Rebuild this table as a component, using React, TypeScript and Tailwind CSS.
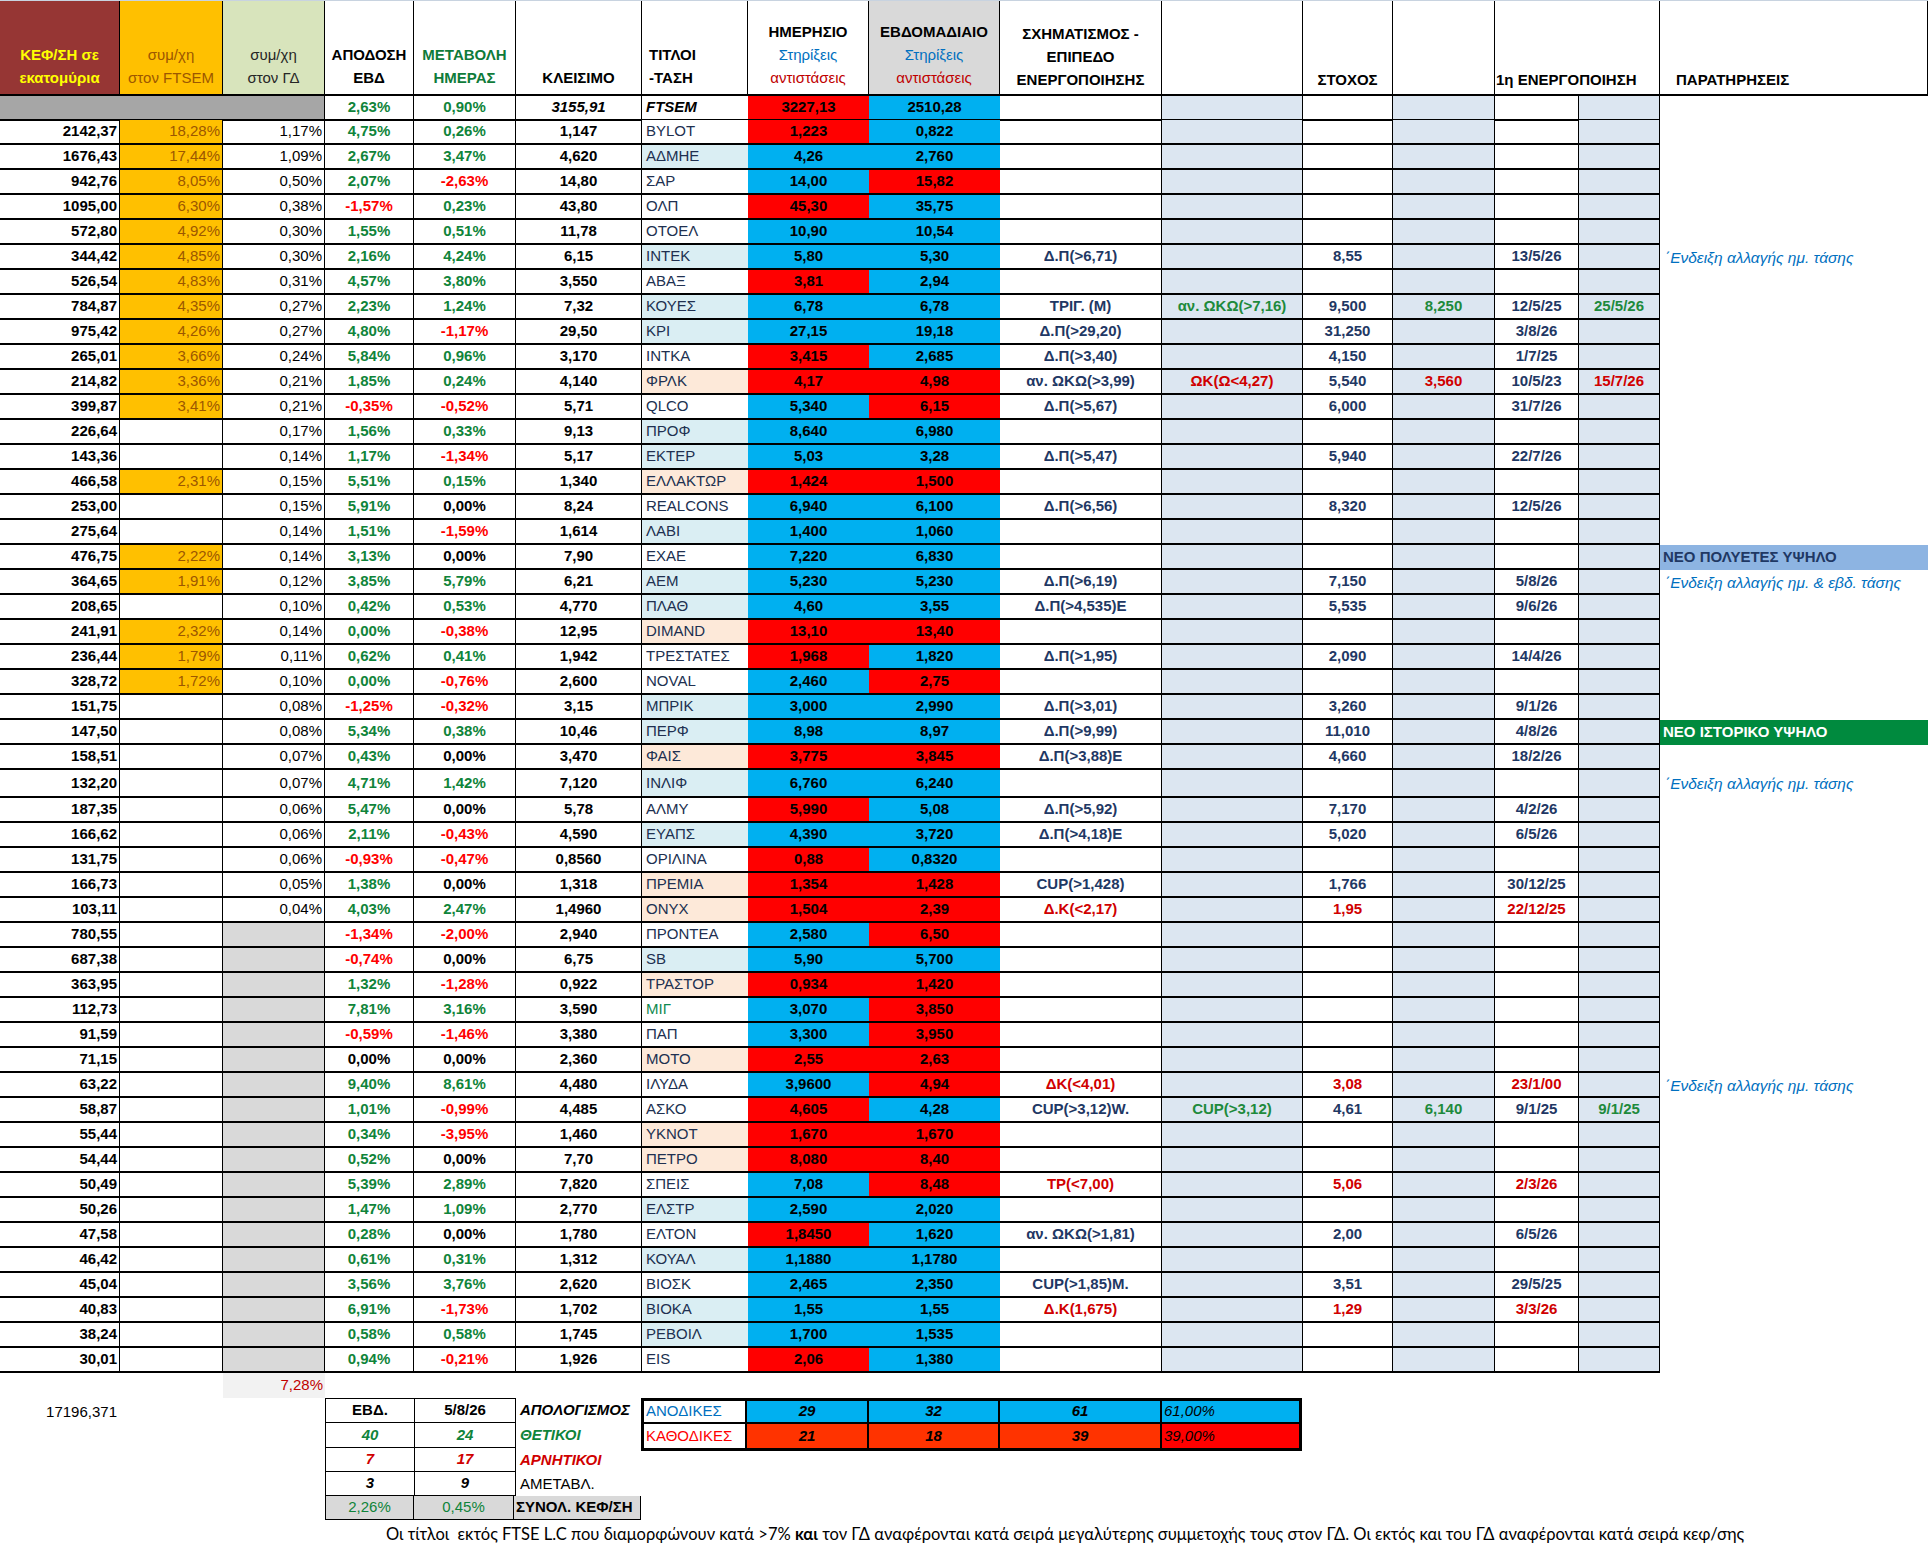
import React from "react";

const G =
  "grid grid-cols-[120px_103px_102px_89px_102px_126px_106px_121px_131px_162px_141px_90px_102px_84px_81px_268px]";

// c|ftsem|gd|apod|metab|close|title|titleBg|daily|dc|weekly|wc
const raw = [
  "2142,37|18,28%|1,17%|4,75%|0,26%|1,147|BYLOT|w|1,223|R|0,822|B",
  "1676,43|17,44%|1,09%|2,67%|3,47%|4,620|ΑΔΜΗΕ|b|4,26|B|2,760|B",
  "942,76|8,05%|0,50%|2,07%|-2,63%|14,80|ΣΑΡ|w|14,00|B|15,82|R",
  "1095,00|6,30%|0,38%|-1,57%|0,23%|43,80|ΟΛΠ|w|45,30|R|35,75|B",
  "572,80|4,92%|0,30%|1,55%|0,51%|11,78|ΟΤΟΕΛ|w|10,90|B|10,54|B",
  "344,42|4,85%|0,30%|2,16%|4,24%|6,15|ΙΝΤΕΚ|b|5,80|B|5,30|B",
  "526,54|4,83%|0,31%|4,57%|3,80%|3,550|ΑΒΑΞ|w|3,81|R|2,94|B",
  "784,87|4,35%|0,27%|2,23%|1,24%|7,32|ΚΟΥΕΣ|b|6,78|B|6,78|B",
  "975,42|4,26%|0,27%|4,80%|-1,17%|29,50|ΚΡΙ|b|27,15|B|19,18|B",
  "265,01|3,66%|0,24%|5,84%|0,96%|3,170|ΙΝΤΚΑ|w|3,415|R|2,685|B",
  "214,82|3,36%|0,21%|1,85%|0,24%|4,140|ΦΡΛΚ|p|4,17|R|4,98|R",
  "399,87|3,41%|0,21%|-0,35%|-0,52%|5,71|QLCO|w|5,340|B|6,15|R",
  "226,64||0,17%|1,56%|0,33%|9,13|ΠΡΟΦ|b|8,640|B|6,980|B",
  "143,36||0,14%|1,17%|-1,34%|5,17|ΕΚΤΕΡ|b|5,03|B|3,28|B",
  "466,58|2,31%|0,15%|5,51%|0,15%|1,340|ΕΛΛΑΚΤΩΡ|p|1,424|R|1,500|R",
  "253,00||0,15%|5,91%|0,00%|8,24|REALCONS|w|6,940|B|6,100|B",
  "275,64||0,14%|1,51%|-1,59%|1,614|ΛΑΒΙ|b|1,400|B|1,060|B",
  "476,75|2,22%|0,14%|3,13%|0,00%|7,90|ΕΧΑΕ|w|7,220|B|6,830|B",
  "364,65|1,91%|0,12%|3,85%|5,79%|6,21|ΑΕΜ|b|5,230|B|5,230|B",
  "208,65||0,10%|0,42%|0,53%|4,770|ΠΛΑΘ|b|4,60|B|3,55|B",
  "241,91|2,32%|0,14%|0,00%|-0,38%|12,95|DIMAND|p|13,10|R|13,40|R",
  "236,44|1,79%|0,11%|0,62%|0,41%|1,942|ΤΡΕΣΤΑΤΕΣ|w|1,968|R|1,820|B",
  "328,72|1,72%|0,10%|0,00%|-0,76%|2,600|NOVAL|w|2,460|B|2,75|R",
  "151,75||0,08%|-1,25%|-0,32%|3,15|ΜΠΡΙΚ|b|3,000|B|2,990|B",
  "147,50||0,08%|5,34%|0,38%|10,46|ΠΕΡΦ|b|8,98|B|8,97|B",
  "158,51||0,07%|0,43%|0,00%|3,470|ΦΑΙΣ|p|3,775|R|3,845|R",
  "132,20||0,07%|4,71%|1,42%|7,120|ΙΝΛΙΦ|b|6,760|B|6,240|B",
  "187,35||0,06%|5,47%|0,00%|5,78|ΑΛΜΥ|w|5,990|R|5,08|B",
  "166,62||0,06%|2,11%|-0,43%|4,590|ΕΥΑΠΣ|b|4,390|B|3,720|B",
  "131,75||0,06%|-0,93%|-0,47%|0,8560|ΟΡΙΛΙΝΑ|w|0,88|R|0,8320|B",
  "166,73||0,05%|1,38%|0,00%|1,318|ΠΡΕΜΙΑ|p|1,354|R|1,428|R",
  "103,11||0,04%|4,03%|2,47%|1,4960|ΟΝΥΧ|p|1,504|R|2,39|R",
  "780,55||#|-1,34%|-2,00%|2,940|ΠΡΟΝΤΕΑ|w|2,580|B|6,50|R",
  "687,38||#|-0,74%|0,00%|6,75|SB|b|5,90|B|5,700|B",
  "363,95||#|1,32%|-1,28%|0,922|ΤΡΑΣΤΟΡ|p|0,934|R|1,420|R",
  "112,73||#|7,81%|3,16%|3,590|ΜΙΓ|w|3,070|B|3,850|R",
  "91,59||#|-0,59%|-1,46%|3,380|ΠΑΠ|w|3,300|B|3,950|R",
  "71,15||#|0,00%|0,00%|2,360|ΜΟΤΟ|p|2,55|R|2,63|R",
  "63,22||#|9,40%|8,61%|4,480|ΙΛΥΔΑ|w|3,9600|B|4,94|R",
  "58,87||#|1,01%|-0,99%|4,485|ΑΣΚΟ|w|4,605|R|4,28|B",
  "55,44||#|0,34%|-3,95%|1,460|ΥΚΝΟΤ|p|1,670|R|1,670|R",
  "54,44||#|0,52%|0,00%|7,70|ΠΕΤΡΟ|p|8,080|R|8,40|R",
  "50,49||#|5,39%|2,89%|7,820|ΣΠΕΙΣ|w|7,08|B|8,48|R",
  "50,26||#|1,47%|1,09%|2,770|ΕΛΣΤΡ|b|2,590|B|2,020|B",
  "47,58||#|0,28%|0,00%|1,780|ΕΛΤΟΝ|w|1,8450|R|1,620|B",
  "46,42||#|0,61%|0,31%|1,312|ΚΟΥΑΛ|b|1,1880|B|1,1780|B",
  "45,04||#|3,56%|3,76%|2,620|ΒΙΟΣΚ|w|2,465|B|2,350|B",
  "40,83||#|6,91%|-1,73%|1,702|ΒΙΟΚΑ|b|1,55|B|1,55|B",
  "38,24||#|0,58%|0,58%|1,745|ΡΕΒΟΙΛ|b|1,700|B|1,535|B",
  "30,01||#|0,94%|-0,21%|1,926|EIS|w|2,06|R|1,380|B",
];

type Side = {
  sx?: string;
  red?: boolean;
  c11?: string;
  tg?: string;
  c13?: string;
  dt?: string;
  c15?: string;
  alt?: "g" | "r";
  note?: "trend" | "trend2" | "poly" | "hist";
};

const side: Record<string, Side> = {
  ΙΝΤΕΚ: { sx: "Δ.Π(>6,71)", tg: "8,55", dt: "13/5/26", note: "trend" },
  ΚΟΥΕΣ: { sx: "ΤΡΙΓ. (Μ)", c11: "αν. ΩΚΩ(>7,16)", tg: "9,500", c13: "8,250", dt: "12/5/25", c15: "25/5/26", alt: "g" },
  ΚΡΙ: { sx: "Δ.Π(>29,20)", tg: "31,250", dt: "3/8/26" },
  ΙΝΤΚΑ: { sx: "Δ.Π(>3,40)", tg: "4,150", dt: "1/7/25" },
  ΦΡΛΚ: { sx: "αν. ΩΚΩ(>3,99)", c11: "ΩΚ(Ω<4,27)", tg: "5,540", c13: "3,560", dt: "10/5/23", c15: "15/7/26", alt: "r" },
  QLCO: { sx: "Δ.Π(>5,67)", tg: "6,000", dt: "31/7/26" },
  ΕΚΤΕΡ: { sx: "Δ.Π(>5,47)", tg: "5,940", dt: "22/7/26" },
  REALCONS: { sx: "Δ.Π(>6,56)", tg: "8,320", dt: "12/5/26" },
  ΕΧΑΕ: { note: "poly" },
  ΑΕΜ: { sx: "Δ.Π(>6,19)", tg: "7,150", dt: "5/8/26", note: "trend2" },
  ΠΛΑΘ: { sx: "Δ.Π(>4,535)Ε", tg: "5,535", dt: "9/6/26" },
  ΤΡΕΣΤΑΤΕΣ: { sx: "Δ.Π(>1,95)", tg: "2,090", dt: "14/4/26" },
  ΜΠΡΙΚ: { sx: "Δ.Π(>3,01)", tg: "3,260", dt: "9/1/26" },
  ΠΕΡΦ: { sx: "Δ.Π(>9,99)", tg: "11,010", dt: "4/8/26", note: "hist" },
  ΦΑΙΣ: { sx: "Δ.Π(>3,88)Ε", tg: "4,660", dt: "18/2/26" },
  ΙΝΛΙΦ: { note: "trend" },
  ΑΛΜΥ: { sx: "Δ.Π(>5,92)", tg: "7,170", dt: "4/2/26" },
  ΕΥΑΠΣ: { sx: "Δ.Π(>4,18)Ε", tg: "5,020", dt: "6/5/26" },
  ΠΡΕΜΙΑ: { sx: "CUP(>1,428)", tg: "1,766", dt: "30/12/25" },
  ΟΝΥΧ: { sx: "Δ.Κ(<2,17)", red: true, tg: "1,95", dt: "22/12/25" },
  ΙΛΥΔΑ: { sx: "ΔΚ(<4,01)", red: true, tg: "3,08", dt: "23/1/00", note: "trend" },
  ΑΣΚΟ: { sx: "CUP(>3,12)W.", c11: "CUP(>3,12)", tg: "4,61", c13: "6,140", dt: "9/1/25", c15: "9/1/25", alt: "g" },
  ΣΠΕΙΣ: { sx: "ΤΡ(<7,00)", red: true, tg: "5,06", dt: "2/3/26" },
  ΕΛΤΟΝ: { sx: "αν. ΩΚΩ(>1,81)", tg: "2,00", dt: "6/5/26" },
  ΒΙΟΣΚ: { sx: "CUP(>1,85)Μ.", tg: "3,51", dt: "29/5/25" },
  ΒΙΟΚΑ: { sx: "Δ.Κ(1,675)", red: true, tg: "1,29", dt: "3/3/26" },
};

const cell = "flex items-center border-b-2 border-black whitespace-nowrap";
const titleBg: Record<string, string> = { w: "bg-white", b: "bg-[#daeef3]", p: "bg-[#fde9d9]" };
const fill: Record<string, string> = { R: "bg-[#ff0000]", B: "bg-[#00b0f0]" };
const altColor: Record<string, string> = { g: "text-[#1e8a3c]", r: "text-[#d00000]" };

function pctColor(v: string, zeroGreen: boolean) {
  if (v.startsWith("-")) return "text-[#ff0000]";
  if (v === "0,00%" && !zeroGreen) return "text-black";
  return "text-[#0f843a]";
}

function Note({ kind }: { kind?: Side["note"] }) {
  if (kind === "poly")
    return (
      <div className="flex items-center bg-[#8db4e2] pl-[3px] font-bold text-[#1f3864]">ΝΕΟ ΠΟΛΥΕΤΕΣ ΥΨΗΛΟ</div>
    );
  if (kind === "hist")
    return <div className="flex items-center bg-[#008a3e] pl-[3px] font-bold text-white">ΝΕΟ ΙΣΤΟΡΙΚΟ ΥΨΗΛΟ</div>;
  if (kind === "trend" || kind === "trend2")
    return (
      <div className="flex items-center whitespace-nowrap pl-[5px] text-[15.5px] italic text-[#0070c0]">
        {kind === "trend" ? "΄Ενδειξη αλλαγής ημ. τάσης" : "΄Ενδειξη αλλαγής ημ. & εβδ. τάσης"}
      </div>
    );
  return <div />;
}

function DataRow({ line }: { line: string }) {
  const [c, f, g, a, m, k, t, tb, d, dc, w, wc] = line.split("|");
  const s = side[t] ?? {};
  const main = s.red ? "text-[#d00000]" : "text-[#1f3864]";
  const alt = s.alt ? altColor[s.alt] : "";
  return (
    <div className={`${G} ${t === "ΙΝΛΙΦ" ? "h-[28px]" : "h-[25px]"}`}>
      <div className={`${cell} justify-end border-r pr-[2px] font-bold`}>{c}</div>
      <div className={`${cell} justify-end border-r pr-[2px] text-[#9c5700] ${f ? "bg-[#ffc000]" : ""}`}>{f}</div>
      <div className={`${cell} justify-end border-r pr-[2px] ${g === "#" ? "bg-[#d9d9d9]" : ""}`}>{g === "#" ? "" : g}</div>
      <div className={`${cell} justify-center border-r font-bold ${pctColor(a, t !== "ΜΟΤΟ")}`}>{a}</div>
      <div className={`${cell} justify-center border-r font-bold ${pctColor(m, false)}`}>{m}</div>
      <div className={`${cell} justify-center border-r font-bold`}>{k}</div>
      <div className={`${cell} pl-[4px] ${titleBg[tb]} ${t === "ΜΙΓ" ? "text-[#0f8a50]" : "text-[#203050]"}`}>{t}</div>
      <div className={`${cell} justify-center font-bold ${fill[dc]}`}>{d}</div>
      <div className={`${cell} justify-center font-bold ${fill[wc]}`}>{w}</div>
      <div className={`${cell} justify-center border-r font-bold ${main}`}>{s.sx}</div>
      <div className={`${cell} justify-center border-r bg-[#dce6f1] font-bold ${alt}`}>{s.c11}</div>
      <div className={`${cell} justify-center border-r font-bold ${main}`}>{s.tg}</div>
      <div className={`${cell} justify-center border-r bg-[#dce6f1] font-bold ${alt}`}>{s.c13}</div>
      <div className={`${cell} justify-center border-r font-bold ${main}`}>{s.dt}</div>
      <div className={`${cell} justify-center border-r bg-[#dce6f1] font-bold ${alt}`}>{s.c15}</div>
      <Note kind={s.note} />
    </div>
  );
}

function Header() {
  const h = "flex flex-col justify-end border-r border-b-2 border-black pb-[5px] leading-[23px] font-bold";
  return (
    <div className={`${G} h-[96px] border-t border-[#c8d3e0]`}>
      <div className={`${h} items-center bg-[#963634] text-[#ffff00]`}>
        <span>ΚΕΦ/ΣΗ σε</span>
        <span>εκατομύρια</span>
      </div>
      <div className={`${h} items-center bg-[#ffc000] !font-normal text-[#9c5700]`}>
        <span>συμ/χη</span>
        <span>στον FTSEM</span>
      </div>
      <div className={`${h} items-center bg-[#d8e4bc] !font-normal text-[#262626]`}>
        <span>συμ/χη</span>
        <span>στον ΓΔ</span>
      </div>
      <div className={`${h} items-center`}>
        <span>ΑΠΟΔΟΣΗ</span>
        <span>ΕΒΔ</span>
      </div>
      <div className={`${h} items-center text-[#0f7b3a]`}>
        <span>ΜΕΤΑΒΟΛΗ</span>
        <span>ΗΜΕΡΑΣ</span>
      </div>
      <div className={`${h} items-center`}>
        <span>ΚΛΕΙΣΙΜΟ</span>
      </div>
      <div className={`${h} items-start pl-[7px]`}>
        <span>ΤΙΤΛΟΙ</span>
        <span>-ΤΑΣΗ</span>
      </div>
      <div className={`${h} items-center`}>
        <span>ΗΜΕΡΗΣΙΟ</span>
        <span className="font-normal text-[#0070c0]">Στηρίξεις</span>
        <span className="font-normal text-[#c00000]">αντιστάσεις</span>
      </div>
      <div className={`${h} items-center bg-[#d9d9d9]`}>
        <span>ΕΒΔΟΜΑΔΙΑΙΟ</span>
        <span className="font-normal text-[#0070c0]">Στηρίξεις</span>
        <span className="font-normal text-[#c00000]">αντιστάσεις</span>
      </div>
      <div className={`${h} items-center !pb-[3px]`}>
        <span>ΣΧΗΜΑΤΙΣΜΟΣ -</span>
        <span>ΕΠΙΠΕΔΟ</span>
        <span>ΕΝΕΡΓΟΠΟΙΗΣΗΣ</span>
      </div>
      <div className={h} />
      <div className={`${h} items-center !pb-[3px]`}>
        <span>ΣΤΟΧΟΣ</span>
      </div>
      <div className={h} />
      <div className={`${h} col-span-2 items-start !pb-[3px] pl-[1px]`}>
        <span>1η ΕΝΕΡΓΟΠΟΙΗΣΗ</span>
      </div>
      <div className={`${h} items-start !pb-[3px] pl-[16px]`}>
        <span>ΠΑΡΑΤΗΡΗΣΕΙΣ</span>
      </div>
    </div>
  );
}

function IndexRow() {
  return (
    <div className={`${G} h-[24px]`}>
      <div className={`${cell} col-span-3 border-r bg-[#a6a6a6]`} />
      <div className={`${cell} justify-center border-r font-bold text-[#0f843a]`}>2,63%</div>
      <div className={`${cell} justify-center border-r font-bold text-[#0f843a]`}>0,90%</div>
      <div className={`${cell} justify-center border-r font-bold italic`}>3155,91</div>
      <div className={`${cell} pl-[4px] font-bold italic`}>FTSEM</div>
      <div className={`${cell} justify-center bg-[#ff0000] font-bold`}>3227,13</div>
      <div className={`${cell} justify-center bg-[#00b0f0] font-bold`}>2510,28</div>
      <div className={`${cell} border-r`} />
      <div className={`${cell} border-r bg-[#dce6f1]`} />
      <div className={`${cell} border-r`} />
      <div className={`${cell} border-r bg-[#dce6f1]`} />
      <div className={`${cell} border-r`} />
      <div className={`${cell} border-r bg-[#dce6f1]`} />
      <div />
    </div>
  );
}

function Summary() {
  const c = "flex items-center justify-center border-r border-b border-black";
  return (
    <div className="flex">
      <div className="w-[120px] pr-[3px] pt-[3px] text-right">17196,371</div>
      <div className="w-[205px]" />
      <div className="w-[316px]">
        <div className="flex h-[25px]">
          <div className={`${c} w-[90px] border-t border-l font-bold`}>ΕΒΔ.</div>
          <div className={`${c} w-[101px] border-t font-bold`}>5/8/26</div>
          <div className="flex w-[125px] items-center pl-[4px] font-bold italic">ΑΠΟΛΟΓΙΣΜΟΣ</div>
        </div>
        <div className="flex h-[25px]">
          <div className={`${c} w-[90px] border-l font-bold italic text-[#0f843a]`}>40</div>
          <div className={`${c} w-[101px] font-bold italic text-[#0f843a]`}>24</div>
          <div className="flex w-[125px] items-center pl-[4px] font-bold italic text-[#0f843a]">ΘΕΤΙΚΟΙ</div>
        </div>
        <div className="flex h-[24px]">
          <div className={`${c} w-[90px] border-l font-bold italic text-[#d00000]`}>7</div>
          <div className={`${c} w-[101px] font-bold italic text-[#d00000]`}>17</div>
          <div className="flex w-[125px] items-center pl-[4px] font-bold italic text-[#d00000]">ΑΡΝΗΤΙΚΟΙ</div>
        </div>
        <div className="flex h-[24px]">
          <div className={`${c} w-[90px] border-l font-bold italic`}>3</div>
          <div className={`${c} w-[101px] font-bold italic`}>9</div>
          <div className="flex w-[125px] items-center pl-[4px]">ΑΜΕΤΑΒΛ.</div>
        </div>
        <div className="flex h-[24px] bg-[#d9d9d9]">
          <div className={`${c} w-[90px] border-l text-[#0f843a]`}>2,26%</div>
          <div className={`${c} w-[101px] text-[#0f843a]`}>0,45%</div>
          <div className="flex w-[127px] shrink-0 items-center border-r border-b border-black pl-[2px] font-bold">
            ΣΥΝΟΛ. ΚΕΦ/ΣΗ
          </div>
        </div>
      </div>
      <div className="h-[53px] w-[661px] border-[3px] border-black">
        <div className="flex h-[23px] border-b-2 border-black">
          <div className="flex w-[103px] items-center border-r-2 border-black pl-[2px] text-[#0070c0]">ΑΝΟΔΙΚΕΣ</div>
          <div className="flex w-[122px] items-center justify-center border-r-2 border-black bg-[#00b0f0] font-bold italic">29</div>
          <div className="flex w-[131px] items-center justify-center border-r-2 border-black bg-[#00b0f0] font-bold italic">32</div>
          <div className="flex w-[162px] items-center justify-center border-r-2 border-black bg-[#00b0f0] font-bold italic">61</div>
          <div className="flex flex-1 items-center bg-[#00b0f0] pl-[2px] italic">61,00%</div>
        </div>
        <div className="flex h-[24px]">
          <div className="flex w-[103px] items-center border-r-2 border-black pl-[2px] text-[#ff0000]">ΚΑΘΟΔΙΚΕΣ</div>
          <div className="flex w-[122px] items-center justify-center border-r-2 border-black bg-[#ff3300] font-bold italic">21</div>
          <div className="flex w-[131px] items-center justify-center border-r-2 border-black bg-[#ff3300] font-bold italic">18</div>
          <div className="flex w-[162px] items-center justify-center border-r-2 border-black bg-[#ff3300] font-bold italic">39</div>
          <div className="flex flex-1 items-center bg-[#ff0000] pl-[2px] italic">39,00%</div>
        </div>
      </div>
    </div>
  );
}

export default function App() {
  return (
    <div className="h-[1549px] w-[1928px] overflow-hidden bg-white font-['Liberation_Sans',Arial,sans-serif] text-[15px] text-black">
      <Header />
      <IndexRow />
      {raw.map((l) => (
        <DataRow key={l} line={l} />
      ))}
      <div className="flex h-[25px]">
        <div className="w-[223px]" />
        <div className="flex w-[102px] items-center justify-end bg-[#f2f2f2] pr-[2px] text-[#c00000]">7,28%</div>
      </div>
      <Summary />
      <div className="whitespace-nowrap pt-[2px] pl-[386px] font-['Lato',sans-serif] text-[16.5px]">
        Οι τίτλοι &nbsp;εκτός FTSE L.C που διαμορφώνουν κατά &gt;7% <b>και</b> τον ΓΔ αναφέρονται κατά σειρά
        μεγαλύτερης συμμετοχής τους στον ΓΔ. Οι εκτός και του ΓΔ αναφέρονται κατά σειρά κεφ/σης
      </div>
    </div>
  );
}
